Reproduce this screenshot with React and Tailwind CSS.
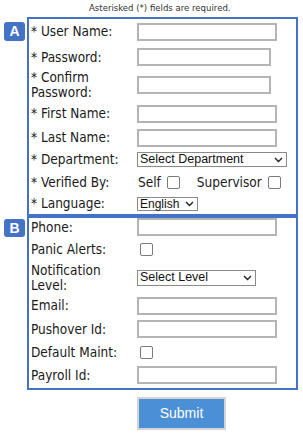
import React from "react";

const FONT = "font-['DejaVu_Sans_Condensed','DejaVu_Sans',sans-serif]";
const LBL = `${FONT} text-[13.5px] leading-[15px] text-[#1a1a1a]`;

function Input({ w = "w-[140px]" }) {
  return <input type="text" className={`${w} h-[18px] border-2 border-[#b4b4b4] bg-white outline-none`} />;
}

function Check() {
  return <span className="inline-block w-[13px] h-[13px] border border-[#7a7a7a] rounded-[2px] bg-white" />;
}

function Select({ w, h, text, size = "text-[12.5px]" }) {
  return (
    <div className={`relative ${w} ${h} border border-[#8a8a8a] bg-white flex items-center pl-[2px]`}>
      <span className={`font-['Liberation_Sans',Arial,sans-serif] ${size} leading-none text-[#111]`}>{text}</span>
      <svg className="absolute right-[3px] top-1/2 -translate-y-1/2" width="9" height="6" viewBox="0 0 9 6">
        <path d="M1 1 L4.5 4.5 L8 1" fill="none" stroke="#222" strokeWidth="1.4" />
      </svg>
    </div>
  );
}

function Row({ h, label, children }) {
  return (
    <div className={`flex items-center ${h}`}>
      <div className={`w-[106px] shrink-0 ${LBL}`}>{label}</div>
      <div className="flex items-center">{children}</div>
    </div>
  );
}

function Badge({ letter, cls }) {
  return (
    <div className={`w-[21px] ${cls} shrink-0 rounded-[3px] bg-[#4472c4] flex items-center justify-center text-white font-bold font-['Liberation_Sans',Arial,sans-serif] text-[14px]`}>
      {letter}
    </div>
  );
}

export default function App() {
  return (
    <div className="w-[303px] h-[434px] bg-white overflow-hidden">
      <div className={`h-[17px] pl-[89px] pt-[3px] ${FONT} text-[9.5px] leading-[10px] text-[#333]`}>
        Asterisked (*) fields are required.
      </div>

      <div className="flex pl-[4px]">
        <Badge letter="A" cls="h-[19px] mt-[5px]" />
        <div className="ml-[2px] w-[271px] border-2 border-[#4472c4] pl-[2px]">
          <Row h="h-[25px]" label="* User Name:"><Input /></Row>
          <Row h="h-[26px]" label="* Password:"><Input w="w-[134px]" /></Row>
          <Row h="h-[30px]" label={<>* Confirm<br />Password:</>}><Input w="w-[134px]" /></Row>
          <Row h="h-[27px]" label="* First Name:"><Input /></Row>
          <Row h="h-[21px]" label="* Last Name:"><Input /></Row>
          <Row h="h-[23px]" label="* Department:">
            <Select w="w-[150px]" h="h-[15px]" text="Select Department" />
          </Row>
          <Row h="h-[22px]" label="* Verified By:">
            <div className={`flex items-center pl-[1px] ${LBL}`}>
              <span>Self</span>
              <span className="ml-[6px] flex"><Check /></span>
              <span className="ml-[17px]">Supervisor</span>
              <span className="ml-[6px] flex"><Check /></span>
            </div>
          </Row>
          <Row h="h-[21px]" label="* Language:">
            <Select w="w-[61px]" h="h-[14px]" text="English" size="text-[12px]" />
          </Row>
        </div>
      </div>

      <div className="flex pl-[4px]">
        <Badge letter="B" cls="h-[18px] mt-[3px]" />
        <div className="ml-[2px] w-[271px] border-2 border-[#4472c4] pl-[2px] pb-[2px]">
          <Row h="h-[18px]" label="Phone:"><Input /></Row>
          <Row h="h-[26px]" label="Panic Alerts:"><span className="ml-[3px] flex"><Check /></span></Row>
          <Row h="h-[31px]" label={<>Notification<br />Level:</>}>
            <Select w="w-[119px]" h="h-[16px]" text="Select Level" />
          </Row>
          <Row h="h-[25px]" label="Email:"><Input /></Row>
          <Row h="h-[22px]" label="Pushover Id:"><Input /></Row>
          <Row h="h-[24px]" label="Default Maint:"><span className="ml-[3px] flex"><Check /></span></Row>
          <Row h="h-[22px]" label="Payroll Id:"><Input /></Row>
        </div>
      </div>

      <div className="pl-[137px] mt-[7px]">
        <button className="w-[89px] h-[33px] border-2 border-[#d4d4d4] bg-[#4b8fd6] text-white font-['Liberation_Sans',Arial,sans-serif] text-[14px]">
          Submit
        </button>
      </div>
    </div>
  );
}
